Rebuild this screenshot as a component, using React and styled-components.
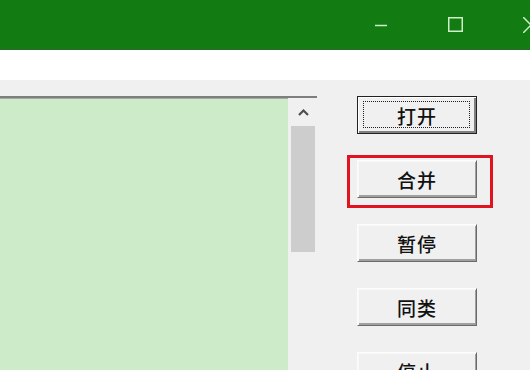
import styled, { createGlobalStyle } from "styled-components";

const Global = createGlobalStyle`
  html, body {
    margin: 0;
    padding: 0;
    width: 530px;
    height: 370px;
    overflow: hidden;
    background: #f0f0f0;
    font-family: "Noto Sans CJK SC", "Liberation Sans", sans-serif;
  }
`;

const Window = styled.div`
  width: 530px;
  height: 370px;
  display: flex;
  flex-direction: column;
  overflow: hidden;
`;

const TitleBar = styled.div`
  height: 49px;
  flex: none;
  background: #127b12;
  border-bottom: 1px solid #2c6a2c;
  display: flex;
  align-items: center;
  padding-left: 343px;
  overflow: hidden;
`;

const Control = styled.div`
  width: 75px;
  height: 49px;
  flex: none;
  display: flex;
  align-items: center;
  justify-content: center;
  color: #cdf0c6;
`;

const MenuStrip = styled.div`
  height: 30px;
  flex: none;
  background: #ffffff;
`;

const Body = styled.div`
  flex: 1;
  display: flex;
  padding-top: 16px;
  background: #f0f0f0;
  min-height: 0;
`;

const ListBox = styled.div`
  width: 317px;
  flex: none;
  display: flex;
  border-top: 2px solid #7e7e7e;
  box-shadow: inset 0 1px 0 #a8a8a8;
  background: #cdebc9;
`;

const ListArea = styled.div`
  flex: 1;
`;

const ScrollBar = styled.div`
  width: 29px;
  flex: none;
  background: #f0f0f0;
  display: flex;
  flex-direction: column;
  padding: 0 2px 0 3px;
  box-sizing: border-box;
`;

const ArrowBtn = styled.div`
  height: 28px;
  display: flex;
  align-items: center;
  justify-content: center;
  color: #505050;
`;

const Thumb = styled.div`
  height: 126px;
  background: #cdcdcd;
`;

const ButtonColumn = styled.div`
  display: flex;
  flex-direction: column;
  gap: 26px;
  margin-left: 40px;
`;

const Highlight = styled.div`
  position: relative;
  flex: none;
  &::after {
    content: "";
    position: absolute;
    top: -5px;
    left: -10px;
    right: -16px;
    bottom: -10px;
    border: 3px solid #e0141e;
    pointer-events: none;
  }
`;

const Button = styled.button`
  width: 120px;
  height: 38px;
  flex: none;
  box-sizing: border-box;
  padding: 0;
  margin: 0;
  font-family: "Noto Sans CJK SC", "Liberation Sans", sans-serif;
  font-size: 19px;
  font-weight: 500;
  color: #111;
  letter-spacing: 1px;
  background: #f0f0f0;
  border: 1px solid;
  border-color: ${(p) => (p.$default ? "#222 #222 #222 #222" : "#fcfcfc #6a6a6a #6a6a6a #fcfcfc")};
  box-shadow: ${(p) =>
    p.$default
      ? "inset 1px 1px 0 #fff, inset -2px -2px 0 #808080"
      : "inset 1px 1px 0 #f8f8f8, inset -1px -2px 0 #a0a0a0"};
  position: relative;
  display: flex;
  align-items: center;
  justify-content: center;
  line-height: 1;
`;

const Focus = styled.span`
  position: absolute;
  top: 4px;
  left: 5px;
  right: 6px;
  bottom: 5px;
  border: 1px dotted #202020;
`;

const labels = ["合并", "暂停", "同类", "停止"];

export default function App() {
  return (
    <Window>
      <Global />
      <TitleBar>
        <Control>
          <svg width="12" height="12" viewBox="0 0 12 12">
            <path d="M0 6.5h12" stroke="currentColor" strokeWidth="1.5" />
          </svg>
        </Control>
        <Control>
          <svg width="15" height="15" viewBox="0 0 15 15">
            <rect x="0.75" y="0.75" width="13.5" height="13.5" fill="none" stroke="currentColor" strokeWidth="1.5" />
          </svg>
        </Control>
        <Control>
          <svg width="16" height="16" viewBox="0 0 16 16">
            <path d="M0 0L16 16M16 0L0 16" stroke="currentColor" strokeWidth="1.5" fill="none" />
          </svg>
        </Control>
      </TitleBar>
      <MenuStrip />
      <Body>
        <ListBox>
          <ListArea />
          <ScrollBar>
            <ArrowBtn>
              <svg width="11" height="7" viewBox="0 0 11 7">
                <path d="M1 6L5.5 1.5L10 6" stroke="currentColor" strokeWidth="2.2" fill="none" />
              </svg>
            </ArrowBtn>
            <Thumb />
          </ScrollBar>
        </ListBox>
        <ButtonColumn>
          <Button $default>
            <Focus />
            打开
          </Button>
          {labels.map((t, i) =>
            i === 0 ? (
              <Highlight key={t}>
                <Button>{t}</Button>
              </Highlight>
            ) : (
              <Button key={t}>{t}</Button>
            )
          )}
        </ButtonColumn>
      </Body>
    </Window>
  );
}
